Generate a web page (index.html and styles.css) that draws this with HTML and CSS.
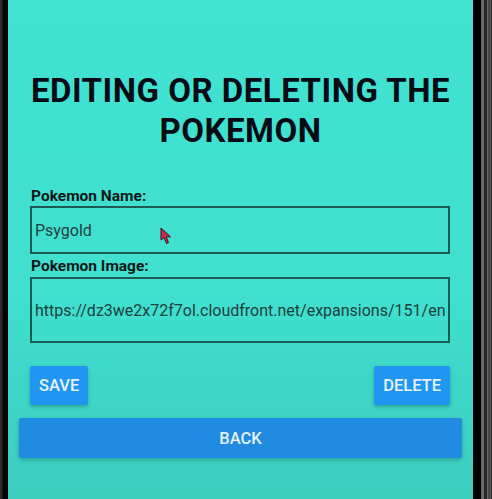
FILE: index.html
```
<!DOCTYPE html>
<html>
<head>
<meta charset="utf-8">
<link rel="stylesheet" href="styles.css">
</head>
<body>
<div class="device">
  <div class="bezel-left"></div>
  <main class="screen">
    <h1 class="title">EDITING OR DELETING THE POKEMON</h1>
    <form class="form">
      <label class="label">Pokemon Name:</label>
      <div class="field field-name"><span class="value">Psygold</span></div>
      <label class="label label-second">Pokemon Image:</label>
      <div class="field field-image"><span class="value">https://dz3we2x72f7ol.cloudfront.net/expansions/151/en-</span></div>
      <div class="actions">
        <button type="button" class="btn">SAVE</button>
        <button type="button" class="btn">DELETE</button>
      </div>
    </form>
    <button type="button" class="btn btn-wide">BACK</button>
    <svg class="cursor" width="13" height="18" viewBox="0 0 13 18">
      <path d="M1 1 L1 13 L4 10.5 L6.5 16.5 L8.5 15.6 L6.2 9.8 L10.5 9.8 Z" fill="#c42a4c" stroke="#3a1020" stroke-width="1" stroke-linejoin="round"/>
    </svg>
  </main>
  <div class="bezel-right">
    <span class="b1"></span><span class="b2"></span><span class="b3"></span><span class="b4"></span>
  </div>
</div>
</body>
</html>
```

FILE: styles.css
```
* { box-sizing: border-box; }
html, body { margin: 0; padding: 0; }
body {
  width: 492px;
  height: 499px;
  overflow: hidden;
  background: #000;
  font-family: Roboto, "Liberation Sans", sans-serif;
}
.device {
  display: flex;
  height: 499px;
}
.bezel-left {
  width: 8px;
  background: linear-gradient(to right, #2a2a2a 0, #2a2a2a 2px, #050505 3px, #000 8px);
}
.screen {
  position: relative;
  width: 465px;
  background: linear-gradient(to bottom, #41e2d1 0%, #40dfcf 60%, #3ccdbd 100%);
  display: flex;
  flex-direction: column;
}
.bezel-right {
  flex: 1;
  display: flex;
  background: #000;
}
.bezel-right .b1 { width: 8px; background: #000; }
.bezel-right .b2 { width: 3px; background: #6a6a6a; }
.bezel-right .b3 { width: 3px; background: #2a2a2a; }
.bezel-right .b4 { flex: 1; background: linear-gradient(to right, #7a7a7a, #3a3a3a 40%, #555 70%, #222); }

.title {
  margin: 71px 0 0;
  font-size: 33px;
  line-height: 40px;
  letter-spacing: 0.5px;
  font-weight: 700;
  text-align: center;
  color: #080b14;
  padding: 0 10px;
}
.form {
  display: flex;
  flex-direction: column;
  padding: 0 23px 0 22px;
  margin-top: 37px;
}
.label {
  font-size: 15.5px;
  line-height: 16px;
  font-weight: 700;
  color: #0d1716;
  padding-left: 1px;
  margin-bottom: 2px;
}
.label-second { margin-top: 4px; }
.field {
  border: 2px solid #1d5a55;
  display: flex;
  align-items: center;
  padding: 0 3px 0 3px;
  overflow: hidden;
}
.field-name { height: 48px; }
.field-image { height: 66px; margin-top: 1px; }
.value {
  font-size: 16px;
  color: #1f3f3d;
  white-space: nowrap;
  overflow: hidden;
}
.actions {
  display: flex;
  justify-content: space-between;
  margin-top: 23px;
}
.btn {
  border: none;
  background: #2196f0;
  color: #e6f3fc;
  font-family: Roboto, "Liberation Sans", sans-serif;
  font-weight: 500;
  font-size: 16.5px;
  height: 39px;
  padding: 0 9px;
  border-radius: 2px;
  box-shadow: 0 2px 4px rgba(0, 60, 60, 0.3);
}
.btn-wide {
  margin: 13px 11px 0;
  height: 40px;
  background: #218be2;
}
.cursor {
  position: absolute;
  left: 152px;
  top: 227px;
}
```
